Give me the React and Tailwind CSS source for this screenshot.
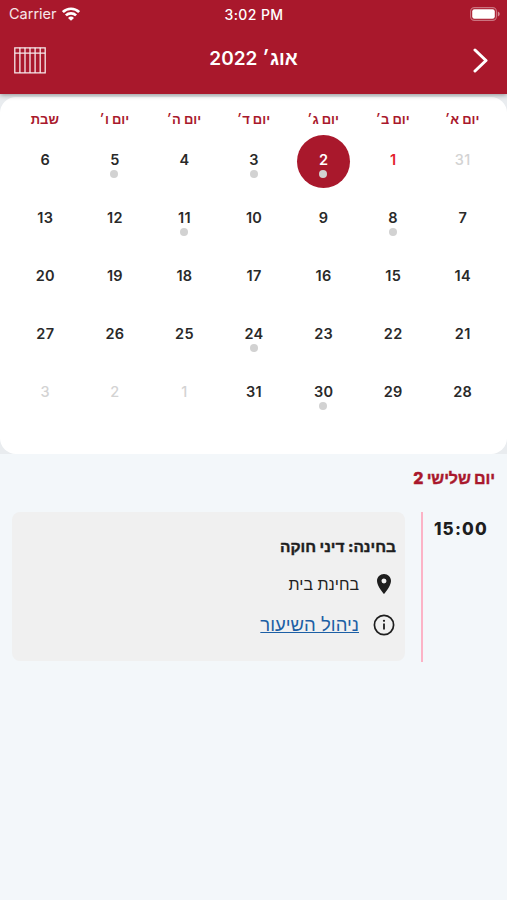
import React, { useState } from 'react';
import { MdLocationOn } from 'react-icons/md';

const WEEKDAYS = ['יום א׳', 'יום ב׳', 'יום ג׳', 'יום ד׳', 'יום ה׳', 'יום ו׳', 'שבת'];

const DAYS = [
  { day: 31, muted: true }, { day: 1, today: true }, { day: 2, event: true }, { day: 3, event: true }, { day: 4 }, { day: 5, event: true }, { day: 6 },
  { day: 7 }, { day: 8, event: true }, { day: 9 }, { day: 10 }, { day: 11, event: true }, { day: 12 }, { day: 13 },
  { day: 14 }, { day: 15 }, { day: 16 }, { day: 17 }, { day: 18 }, { day: 19 }, { day: 20 },
  { day: 21 }, { day: 22 }, { day: 23 }, { day: 24, event: true }, { day: 25 }, { day: 26 }, { day: 27 },
  { day: 28 }, { day: 29 }, { day: 30, event: true }, { day: 31 }, { day: 1, muted: true }, { day: 2, muted: true }, { day: 3, muted: true },
];

function WifiIcon() {
  return (
    <svg width="18" height="14" viewBox="0 0 18 14" fill="none" stroke="white" strokeWidth="2.7">
      <path d="M0.9 5.1a11.5 11.5 0 0 1 16.2 0" />
      <path d="M3.9 8.4a7.3 7.3 0 0 1 10.2 0" />
      <path d="M9 13.8L6 10.9a4.3 4.3 0 0 1 6 0z" fill="white" stroke="none" />
    </svg>
  );
}

function BatteryIcon() {
  return (
    <svg width="31" height="14" viewBox="0 0 31 14" fill="none">
      <rect x="0.6" y="0.6" width="25.8" height="12.8" rx="3.8" stroke="white" strokeOpacity="0.4" strokeWidth="1.1" />
      <rect x="2.2" y="2.2" width="22.6" height="9.6" rx="2.2" fill="white" />
      <path d="M27.8 4.6c1.2.4 1.9 1.3 1.9 2.4s-.7 2-1.9 2.4z" fill="white" fillOpacity="0.5" />
    </svg>
  );
}

function WeekViewIcon() {
  return (
    <svg width="32" height="27" viewBox="0 0 32 27" fill="none" stroke="white" strokeOpacity="0.9" strokeWidth="1.3">
      <path d="M0.8 0.8h30.4v25H0.8z" />
      <path d="M0.8 6.2h30.4M5.9 0.8v25M11 0.8v25M16 0.8v25M21.1 0.8v25M26.2 0.8v25" />
    </svg>
  );
}

function InfoIcon() {
  return (
    <svg width="24" height="24" viewBox="0 0 24 24" fill="none" stroke="currentColor" strokeWidth="1.7">
      <circle cx="12" cy="12" r="9.6" />
      <path d="M12 10.4v6.2" strokeWidth="1.8" />
      <circle cx="12" cy="7.8" r="1.1" fill="currentColor" stroke="none" />
    </svg>
  );
}

function DayCell({ item, selected, onSelect }) {
  let color = 'text-[#292929] font-semibold';
  if (item.muted) color = 'text-[#d3d3d3] font-medium';
  if (item.today) color = 'text-[#e3202b] font-semibold';
  if (selected) color = 'text-white font-semibold';

  return (
    <button onClick={onSelect} className="h-[58px] flex justify-center">
      <span className={`w-[53px] h-[53px] rounded-full flex flex-col items-center pt-[15px] ${selected ? 'bg-[#a9182c]' : ''}`}>
        <span className={`text-[14.5px] leading-5 tracking-[0.3px] pl-px ${color}`}>{item.day}</span>
        {item.event && <span className="w-2 h-2 rounded-full bg-[#d2d2d2]" />}
      </span>
    </button>
  );
}

function App() {
  const [selected, setSelected] = useState(2);

  return (
    <div dir="rtl" className="min-h-screen bg-[#f3f7fa] text-[#1e1e1e] font-['Inter','Liberation_Sans',sans-serif]">

      {/* Header */}
      <header className="relative z-10 h-[94px] bg-[#a9182c] text-white shadow-[0_1px_5px_rgba(0,0,0,0.4)]">
        <div dir="ltr" className="h-7 grid grid-cols-3 items-center px-[9px]">
          <div className="flex items-center gap-[5px] text-[14.5px] text-white/90">
            Carrier <WifiIcon />
          </div>
          <div className="text-center text-[14px] font-medium tracking-[0.4px] pl-px">3:02 PM</div>
          <div className="flex justify-end -mr-[3px] -mt-px"><BatteryIcon /></div>
        </div>
        <div className="h-16 grid grid-cols-[1fr_auto_1fr] items-center pr-[19px] pl-[14px]">
          <button className="justify-self-start">
            <svg width="15" height="25" viewBox="0 0 15 25" fill="none" stroke="white" strokeWidth="3" strokeLinecap="round" strokeLinejoin="round">
              <path d="M2 2l11 10.5L2 23" />
            </svg>
          </button>
          <h1 className="text-[19px] font-semibold pb-[2px] ml-[5px]">אוג׳ 2022</h1>
          <button className="justify-self-end"><WeekViewIcon /></button>
        </div>
      </header>

      {/* Month calendar */}
      <div className="bg-[#e9ecef] pt-[3px]">
        <section className="h-[357px] bg-white rounded-2xl px-[10px] pt-3">
          <div className="grid grid-cols-7 h-[26px]">
            {WEEKDAYS.map((name) => (
              <div key={name} className="text-center text-[13px] leading-5 font-bold text-[#a9182c]">{name}</div>
            ))}
          </div>
          <div className="grid grid-cols-7">
            {DAYS.map((item, i) => (
              <DayCell key={i} item={item} selected={i === selected} onSelect={() => setSelected(i)} />
            ))}
          </div>
        </section>
      </div>

      {/* Events of the selected day */}
      <h2 className="px-3 pt-3 text-[16px] leading-6 font-extrabold tracking-[-0.1px] text-[#a9182c] [-webkit-text-stroke:0.4px_#a9182c]">יום שלישי 2</h2>
      <div className="flex mt-[22px] px-3">
        <div className="w-[72px] pt-[7px] pr-[7px] text-[17px] leading-5 font-extrabold tracking-[1.2px]">15:00</div>
        <div className="w-[2px] h-[150px] bg-[#fcb3c6]" />
        <article className="flex-1 h-[149px] mr-4 pr-[9px] bg-[#f0f0f0] rounded-lg">
          <h3 className="mt-6 text-[15.5px] leading-[22px] font-extrabold [-webkit-text-stroke:0.4px_#1e1e1e]">בחינה: דיני חוקה</h3>
          <div className="flex items-center h-6 mt-3.5 gap-[13px]">
            <MdLocationOn className="w-6 h-6" />
            <span className="text-[16px]">בחינת בית</span>
          </div>
          <div className="flex items-center h-6 mt-[17px] gap-[13px]">
            <InfoIcon />
            <a href="#lesson" className="text-[18.5px] text-[#1c5fa5] underline">ניהול השיעור</a>
          </div>
        </article>
      </div>
    </div>
  );
}

export default App;
